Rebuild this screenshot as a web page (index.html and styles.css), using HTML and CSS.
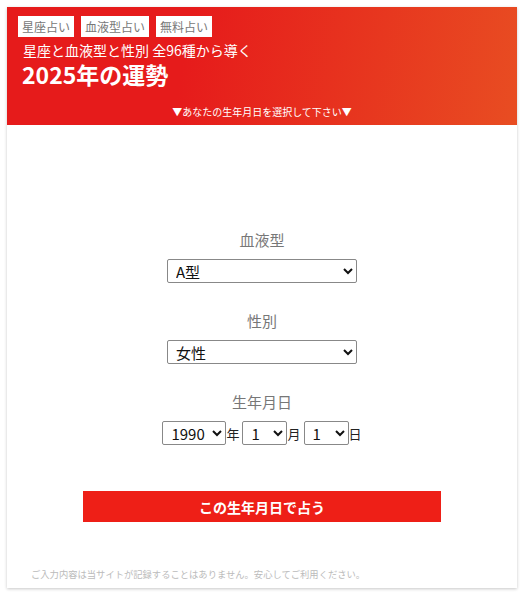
FILE: index.html
```html
<!DOCTYPE html>
<html lang="ja">
<head>
    <meta charset="UTF-8">
    <meta name="viewport" content="width=device-width, initial-scale=1.0">
    <title>2025年の運勢</title>
    <link rel="stylesheet" href="styles.css">
</head>
<body>
    <div class="card">
        <header class="hero">
            <div class="tags">
                <a href="#" class="tag">星座占い</a>
                <a href="#" class="tag">血液型占い</a>
                <a href="#" class="tag">無料占い</a>
            </div>
            <p class="lead">星座と血液型と性別 全96種から導く</p>
            <h1>2025年の運勢</h1>
            <p class="guide">▼あなたの生年月日を選択して下さい▼</p>
        </header>

        <form class="fortune-form" onsubmit="return false;">
            <div class="field">
                <label for="blood">血液型</label>
                <select id="blood" class="wide">
                    <option>A型</option>
                    <option>B型</option>
                    <option>O型</option>
                    <option>AB型</option>
                </select>
            </div>
            <div class="field">
                <label for="sex">性別</label>
                <select id="sex" class="wide">
                    <option>女性</option>
                    <option>男性</option>
                </select>
            </div>
            <div class="field">
                <label for="year">生年月日</label>
                <div class="date-row">
                    <select id="year" class="year"></select><span>年</span>
                    <select id="month" class="small"></select><span>月</span>
                    <select id="day" class="small"></select><span>日</span>
                </div>
            </div>
            <button type="submit" class="submit">この生年月日で占う</button>
            <p class="note">ご入力内容は当サイトが記録することはありません。安心してご利用ください。</p>
        </form>
    </div>

    <script>
        function fill(id, from, to, selected) {
            const el = document.getElementById(id);
            for (let i = from; i <= to; i++) {
                const opt = document.createElement('option');
                opt.textContent = i;
                if (i === selected) opt.selected = true;
                el.appendChild(opt);
            }
        }
        fill('year', 1920, 2025, 1990);
        fill('month', 1, 12, 1);
        fill('day', 1, 31, 1);
    </script>
</body>
</html>
```

FILE: styles.css
```css
body {
    margin: 0;
    padding: 7px;
    background: #fff;
    font-family: "Noto Sans CJK JP", "Noto Sans", sans-serif;
}
.card {
    width: 510px;
    height: 581px;
    background: #fff;
    box-shadow: 0 1px 3px rgba(0, 0, 0, 0.22);
    display: flex;
    flex-direction: column;
}
.hero {
    background: linear-gradient(100deg, #e61b1b 35%, #e84d22 100%);
    color: #fff;
    padding: 9px 11px 0;
    height: 109px;
}
.tags {
    display: flex;
    gap: 7px;
}
.tag {
    background: #fff;
    color: #777;
    font-size: 12px;
    line-height: 17px;
    padding: 2px 4px;
    text-decoration: none;
}
.lead {
    margin: 4px 0 0 5px;
    font-size: 14px;
    line-height: 18px;
}
h1 {
    margin: 0 0 0 4px;
    font-size: 23px;
    line-height: 30px;
    font-weight: bold;
}
.guide {
    margin: 16px 0 0;
    text-align: center;
    font-size: 10px;
    line-height: 14px;
}
.fortune-form {
    flex: 1;
    display: flex;
    flex-direction: column;
    align-items: center;
    padding-top: 105px;
}
.field {
    display: flex;
    flex-direction: column;
    align-items: center;
    margin-bottom: 28px;
}
.field label {
    color: #777;
    font-size: 15px;
    line-height: 20px;
    margin-bottom: 9px;
}
select {
    font-family: "Noto Sans CJK JP", "Liberation Sans", sans-serif;
    font-size: 15px;
    height: 24px;
    border: 1px solid #888;
    border-radius: 2px;
    background: #fff;
    color: #111;
    padding: 0 4px;
}
.wide {
    width: 190px;
}
.date-row {
    display: flex;
    align-items: center;
    font-size: 13px;
    color: #222;
}
.date-row .year {
    width: 64px;
    height: 24px;
}
.date-row .small {
    width: 45px;
    height: 24px;
    margin-left: 3px;
}
.submit {
    margin-top: 18px;
    width: 358px;
    height: 31px;
    background: #ee1f17;
    color: #fff;
    border: none;
    font-family: inherit;
    font-size: 14px;
    font-weight: bold;
    cursor: pointer;
}
.note {
    margin: auto 0 7px 24px;
    align-self: flex-start;
    font-size: 9.3px;
    color: #bbb;
}
```
